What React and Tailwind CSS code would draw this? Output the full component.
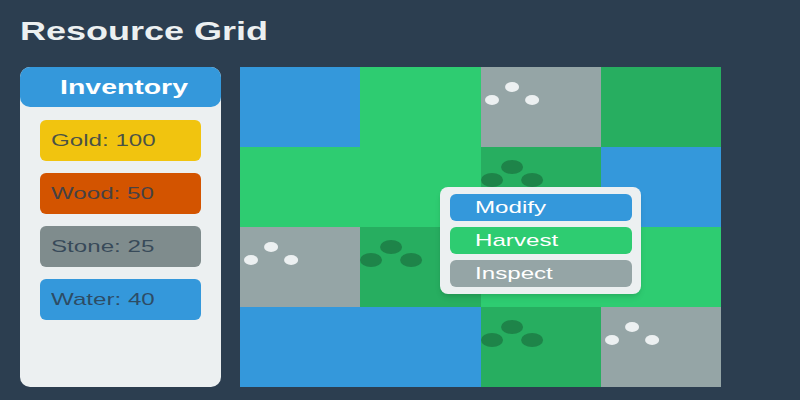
const BLUE = "water";
const GREEN = "grass";
const GRAY = "stone";
const FOREST = "forest";

const cells = [
  BLUE, GREEN, GRAY, "dark",
  GREEN, GREEN, FOREST, BLUE,
  GRAY, FOREST, GREEN, GREEN,
  BLUE, BLUE, FOREST, GRAY,
];

const resources = [
  { label: "Gold: 100", bg: "bg-[#f1c40f]" },
  { label: "Wood: 50", bg: "bg-[#d35400]" },
  { label: "Stone: 25", bg: "bg-[#7f8c8d]" },
  { label: "Water: 40", bg: "bg-[#3498db]" },
];

const actions = [
  { label: "Modify", bg: "bg-[#3498db]" },
  { label: "Harvest", bg: "bg-[#2ecc71]" },
  { label: "Inspect", bg: "bg-[#95a5a6]" },
];

function Dots({ color, rx, ry }) {
  return (
    <svg width="100%" height="100%" viewBox="0 0 120 80" preserveAspectRatio="none">
      <ellipse cx="11" cy="33" rx={rx} ry={ry} fill={color} />
      <ellipse cx="31" cy="20" rx={rx} ry={ry} fill={color} />
      <ellipse cx="51" cy="33" rx={rx} ry={ry} fill={color} />
    </svg>
  );
}

function Cell({ kind }) {
  if (kind === BLUE) return <div className="bg-[#3498db]" />;
  if (kind === GREEN) return <div className="bg-[#2ecc71]" />;
  if (kind === "dark") return <div className="bg-[#27ae60]" />;
  if (kind === GRAY)
    return (
      <div className="bg-[#95a5a6]">
        <Dots color="#ecf0f1" rx={7} ry={5} />
      </div>
    );
  return (
    <div className="bg-[#27ae60]">
      <Dots color="#1e8449" rx={11} ry={7} />
    </div>
  );
}

export default function App() {
  return (
    <div
      className="w-[800px] h-[400px] bg-[#2c3e50] px-[20px] pt-[16px] overflow-hidden"
      style={{ fontFamily: '"Liberation Sans", Arial, sans-serif' }}
    >
      <h1 className="text-[25px] leading-[30px] font-bold text-[#ecf0f1]">
        <span className="inline-block origin-left scale-x-[1.44]">Resource Grid</span>
      </h1>

      <div className="flex gap-[19px] mt-[21px]">
        <aside className="w-[201px] h-[320px] bg-[#ecf0f1] rounded-[10px] flex flex-col">
          <div className="h-[40px] bg-[#3498db] rounded-[10px] flex items-center justify-center pl-[8px] text-white text-[20px] font-bold">
            <span className="inline-block scale-x-[1.42]">Inventory</span>
          </div>
          <div className="flex flex-col gap-[12px] px-[20px] pt-[13px]">
            {resources.map((r) => (
              <div
                key={r.label}
                className={`${r.bg} h-[41px] rounded-[6px] flex items-center pl-[11px] text-[17px] text-[#2c3e50]/85`}
              >
                <span className="inline-block origin-left scale-x-[1.42]">{r.label}</span>
              </div>
            ))}
          </div>
        </aside>

        <div className="relative w-[481px] h-[320px]">
          <div className="grid grid-cols-4 grid-rows-4 w-full h-full">
            {cells.map((c, i) => (
              <Cell key={i} kind={c} />
            ))}
          </div>

          <div className="absolute left-[200px] top-[120px] w-[201px] h-[107px] bg-[#ecf0f1] rounded-[8px] pt-[7px] pl-[10px] pr-[9px] flex flex-col gap-[6px] shadow-md">
            {actions.map((a) => (
              <div
                key={a.label}
                className={`${a.bg} h-[27px] rounded-[6px] flex items-center pl-[25px] text-[17px] text-white`}
              >
                <span className="inline-block origin-left scale-x-[1.42]">{a.label}</span>
              </div>
            ))}
          </div>
        </div>
      </div>
    </div>
  );
}
